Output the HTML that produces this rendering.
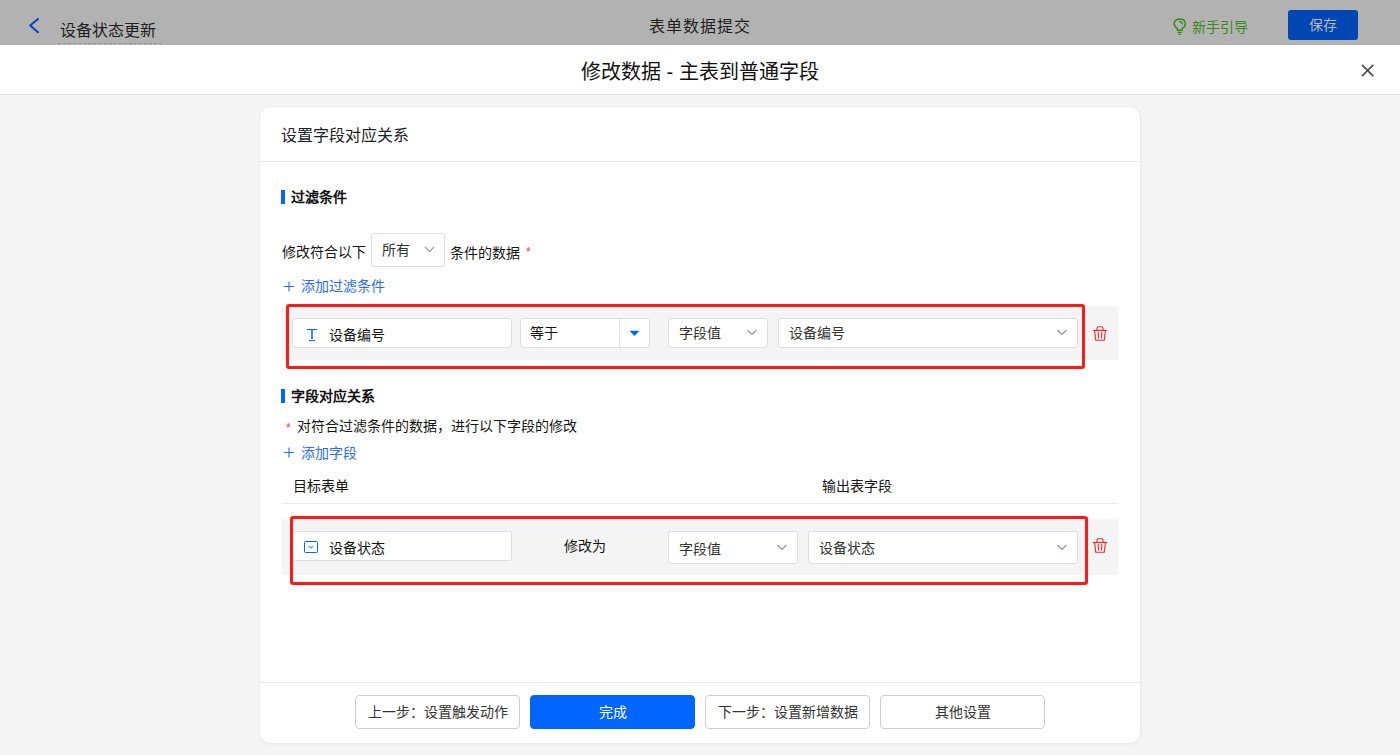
<!DOCTYPE html>
<html lang="zh-CN"><head><meta charset="utf-8">
<style>
*{margin:0;padding:0;box-sizing:border-box;}
html,body{width:1400px;height:755px;overflow:hidden;background:#f5f5f5;font-family:"Liberation Sans",sans-serif;color:#333;}
.a{position:absolute;white-space:nowrap;}
.t14{font-size:14px;line-height:20px;}
.t16{font-size:16px;line-height:22px;}
.topbar{position:absolute;left:0;top:0;width:1400px;height:45px;background:#b2b2b2;}
.hdr{position:absolute;left:0;top:45px;width:1400px;height:50px;background:#fff;border-bottom:1px solid #e6e6e6;}
.card{position:absolute;left:260px;top:107px;width:880px;height:636px;background:#fff;border-radius:10px;box-shadow:0 0 2px rgba(0,0,0,0.07),1px 1px 4px rgba(0,0,0,0.05);}
.box{position:absolute;background:#fff;border:1px solid #dedede;border-radius:3px;}
.row{position:absolute;background:#f4f4f4;border-radius:2px;}
.red{position:absolute;border:3px solid #ff1a1a;border-radius:3px;}
.bar{position:absolute;width:4px;background:#0066ff;}
.btn{position:absolute;top:695px;width:165px;height:34px;border:1px solid #cfcfcf;border-radius:4px;background:#fff;font-size:14px;line-height:32px;text-align:center;color:#333;}
.blue{color:#2b6cf5;}
.cj{display:inline-block;text-align:center;}
</style></head>
<body>
<!-- top bar (dimmed) -->
<div class="topbar"></div>
<svg class="a" style="left:27px;top:16px" width="14" height="19" viewBox="0 0 14 19"><path d="M11 3 L3.2 9.6 L11 16.2" fill="none" stroke="#0a3ec4" stroke-width="2" stroke-linecap="round" stroke-linejoin="round"/></svg>
<div class="a t16" style="left:60px;top:20px;color:#1e1e1e">设备状态更新</div>
<div class="a" style="left:58px;top:43px;width:104px;height:1px;border-top:1px dashed #959595"></div>
<div class="a t16" style="left:649px;top:16px;color:#1f1f1f;letter-spacing:1px">表单数据提交</div>
<svg class="a" style="left:1172px;top:17px" width="16" height="19" viewBox="0 0 16 19"><path d="M5.4 13.2 V11.6 C3.3 10.4 2.2 8.6 2.2 6.6 C2.2 3.8 4.7 1.9 7.8 1.9 C10.9 1.9 13.4 3.8 13.4 6.6 C13.4 8.6 12.3 10.4 10.2 11.6 V13.2 Z" fill="none" stroke="#3a8a1a" stroke-width="1.5" stroke-linejoin="round"/><path d="M7.4 4.3 C8.8 4.6 10.2 5.7 10.6 7.3" fill="none" stroke="#3a8a1a" stroke-width="1.4"/><path d="M5.5 15.4 H9.9 M6.3 17.3 H9.1" stroke="#3a8a1a" stroke-width="1.3"/></svg>
<div class="a t14" style="left:1192px;top:17px;color:#3a8a1a">新手引导</div>
<div class="a" style="left:1288px;top:10px;width:70px;height:30px;background:#0047b3;border-radius:3px;"></div>
<div class="a t14" style="left:1309px;top:15px;color:#b8b8b8">保存</div>

<!-- header -->
<div class="hdr"></div>
<div class="a" style="left:581px;top:58px;font-size:20px;line-height:28px;color:#111">修改数据 - 主表到普通字段</div>
<svg class="a" style="left:1359px;top:62px" width="17" height="17" viewBox="0 0 17 17"><path d="M3 2.8 L14.3 14.1 M14.3 2.8 L3 14.1" stroke="#555" stroke-width="1.8" stroke-linecap="butt"/></svg>

<!-- card -->
<div class="card"></div>
<div class="a t16" style="left:281px;top:125px;color:#1d2129">设置字段对应关系</div>
<div class="a" style="left:260px;top:161px;width:880px;height:1px;background:#e8e8e8"></div>

<div class="bar" style="left:281px;top:190px;height:14px"></div>
<div class="a t14" style="left:291px;top:187px;font-weight:bold;color:#111">过滤条件</div>

<div class="a t14" style="left:282px;top:242px;color:#151515">修改符合以下</div>
<div class="box" style="left:371px;top:233px;width:74px;height:34px"></div>
<div class="a t14" style="left:382px;top:240px;color:#333">所有</div>
<svg class="a" style="left:424px;top:245px" width="11" height="8" viewBox="0 0 11 8"><path d="M1 2 L5.5 6.5 L10 2" fill="none" stroke="#999" stroke-width="1.1"/></svg>
<div class="a t14" style="left:450px;top:242.5px;color:#151515">条件的数据</div>
<div class="a" style="left:526px;top:245px;font-size:12px;line-height:14px;color:#ff3333">*</div>

<svg class="a" style="left:283px;top:281px" width="12" height="12" viewBox="0 0 12 12"><path d="M1 5.5 H11 M6 0.5 V10.5" stroke="#2b6cf5" stroke-width="1.1"/></svg>
<div class="a t14 blue" style="left:301px;top:276px">添加过滤条件</div>

<!-- filter row -->
<div class="row" style="left:282px;top:306px;width:836px;height:54px"></div>
<div class="box" style="left:292px;top:318px;width:220px;height:30px"></div>
<svg class="a" style="left:306px;top:328px" width="12" height="14" viewBox="0 0 12 14"><path d="M1 1.5 H11 M3 12.5 H9" stroke="#0066ff" stroke-width="1"/><path d="M6 1.5 V11" stroke="#0066ff" stroke-width="1.6"/></svg>
<div class="a t14" style="left:329px;top:325px;color:#151515">设备编号</div>

<div class="box" style="left:520px;top:318px;width:130px;height:30px"></div>
<div class="a" style="left:619px;top:319px;width:1px;height:28px;background:#e3e3e3"></div>
<div class="a t14" style="left:530px;top:323px;color:#151515">等于</div>
<svg class="a" style="left:629px;top:330px" width="11" height="7" viewBox="0 0 11 7"><path d="M0.5 0.8 H10.5 L5.5 6 Z" fill="#0066ff"/></svg>

<div class="box" style="left:668px;top:318px;width:100px;height:30px"></div>
<div class="a t14" style="left:679px;top:323px;color:#333">字段值</div>
<svg class="a" style="left:746px;top:328px" width="12" height="9" viewBox="0 0 12 9"><path d="M1.5 2 L6 6.5 L10.5 2" fill="none" stroke="#8c95a0" stroke-width="1.2"/></svg>

<div class="box" style="left:778px;top:318px;width:300px;height:30px"></div>
<div class="a t14" style="left:789px;top:323px;color:#333">设备编号</div>
<svg class="a" style="left:1056px;top:328px" width="12" height="9" viewBox="0 0 12 9"><path d="M1.5 2 L6 6.5 L10.5 2" fill="none" stroke="#8c95a0" stroke-width="1.2"/></svg>

<svg class="a" style="left:1092px;top:325px" width="16" height="17" viewBox="0 0 16 17"><path d="M5 5 V3.3 C5 2.4 5.6 1.8 6.5 1.8 H9.5 C10.4 1.8 11 2.4 11 3.3 V5" fill="none" stroke="#f22424" stroke-width="1.1"/><path d="M1 5.5 H15" stroke="#f22424" stroke-width="1.2"/><path d="M2.6 5.8 L3.8 15.2 H12.2 L13.4 5.8" fill="none" stroke="#f22424" stroke-width="1.1"/><path d="M6.2 7.5 L6.5 13 M9.8 7.5 L9.5 13" stroke="#f22424" stroke-width="1.1" stroke-linecap="round"/></svg>

<div class="red" style="left:286px;top:304px;width:799px;height:65px"></div>

<!-- section 2 -->
<div class="bar" style="left:281px;top:389px;height:14px"></div>
<div class="a t14" style="left:291px;top:386px;font-weight:bold;color:#111">字段对应关系</div>
<div class="a" style="left:286px;top:421px;font-size:12px;line-height:14px;color:#ff3333">*</div>
<div class="a t14" style="left:297px;top:416px;color:#151515">对符合过滤条件的数据，进行以下字段的修改</div>
<svg class="a" style="left:283px;top:447px" width="12" height="12" viewBox="0 0 12 12"><path d="M1 5.5 H11 M6 0.5 V10.5" stroke="#2b6cf5" stroke-width="1.1"/></svg>
<div class="a t14 blue" style="left:301px;top:443px">添加字段</div>

<div class="a t14" style="left:293px;top:476px;color:#151515">目标表单</div>
<div class="a t14" style="left:822px;top:476px;color:#151515">输出表字段</div>
<div class="a" style="left:282px;top:503px;width:836px;height:1px;background:#e8e8e8"></div>

<!-- mapping row -->
<div class="row" style="left:282px;top:519px;width:836px;height:56px"></div>
<div class="box" style="left:292px;top:531px;width:220px;height:30px"></div>
<svg class="a" style="left:303px;top:540px" width="16" height="14" viewBox="0 0 16 14"><rect x="1.5" y="1.5" width="13" height="11" rx="1" fill="none" stroke="#0066ff" stroke-width="1"/><path d="M5.5 5.8 L8 8.3 L10.5 5.8" fill="none" stroke="#0066ff" stroke-width="1"/></svg>
<div class="a t14" style="left:329px;top:538px;color:#151515">设备状态</div>
<div class="a t14" style="left:564px;top:536px;color:#151515">修改为</div>

<div class="box" style="left:668px;top:531px;width:130px;height:33px"></div>
<div class="a t14" style="left:679px;top:539px;color:#333">字段值</div>
<svg class="a" style="left:776px;top:543px" width="12" height="9" viewBox="0 0 12 9"><path d="M1.5 2 L6 6.5 L10.5 2" fill="none" stroke="#8c95a0" stroke-width="1.2"/></svg>

<div class="box" style="left:808px;top:531px;width:270px;height:33px"></div>
<div class="a t14" style="left:819px;top:538px;color:#333">设备状态</div>
<svg class="a" style="left:1056px;top:543px" width="12" height="9" viewBox="0 0 12 9"><path d="M1.5 2 L6 6.5 L10.5 2" fill="none" stroke="#8c95a0" stroke-width="1.2"/></svg>

<svg class="a" style="left:1092px;top:537px" width="16" height="17" viewBox="0 0 16 17"><path d="M5 5 V3.3 C5 2.4 5.6 1.8 6.5 1.8 H9.5 C10.4 1.8 11 2.4 11 3.3 V5" fill="none" stroke="#f22424" stroke-width="1.1"/><path d="M1 5.5 H15" stroke="#f22424" stroke-width="1.2"/><path d="M2.6 5.8 L3.8 15.2 H12.2 L13.4 5.8" fill="none" stroke="#f22424" stroke-width="1.1"/><path d="M6.2 7.5 L6.5 13 M9.8 7.5 L9.5 13" stroke="#f22424" stroke-width="1.1" stroke-linecap="round"/></svg>

<div class="red" style="left:290px;top:516px;width:798px;height:69px"></div>

<!-- footer -->
<div class="a" style="left:260px;top:682px;width:880px;height:1px;background:#e8e8e8"></div>
<div class="btn" style="left:355px">上一步：设置触发动作</div>
<div class="btn" style="left:530px;background:#0066ff;border-color:#0066ff;color:#fff">完成</div>
<div class="btn" style="left:705px">下一步：设置新增数据</div>
<div class="btn" style="left:880px">其他设置</div>
<script>
(function(){
var re=/[\u3000-\u303f\u4e00-\u9fff\uff00-\uffef]/;
var w=document.createTreeWalker(document.body,NodeFilter.SHOW_TEXT,null,false);
var ns=[];while(w.nextNode())ns.push(w.currentNode);
ns.forEach(function(n){
 var t=n.nodeValue;if(!re.test(t))return;
 var p=n.parentNode;if(p.nodeName==='SCRIPT'||p.nodeName==='STYLE')return;
 var ls=parseFloat(getComputedStyle(p).letterSpacing)||0;
 var f=document.createDocumentFragment();
 Array.from(t).forEach(function(ch){
  if(re.test(ch)){var s=document.createElement('span');s.className='cj';s.style.width='calc(1em + '+ls+'px)';s.textContent=ch;f.appendChild(s);}
  else f.appendChild(document.createTextNode(ch));
 });
 p.replaceChild(f,n);
});
})();
</script>
</body></html>
